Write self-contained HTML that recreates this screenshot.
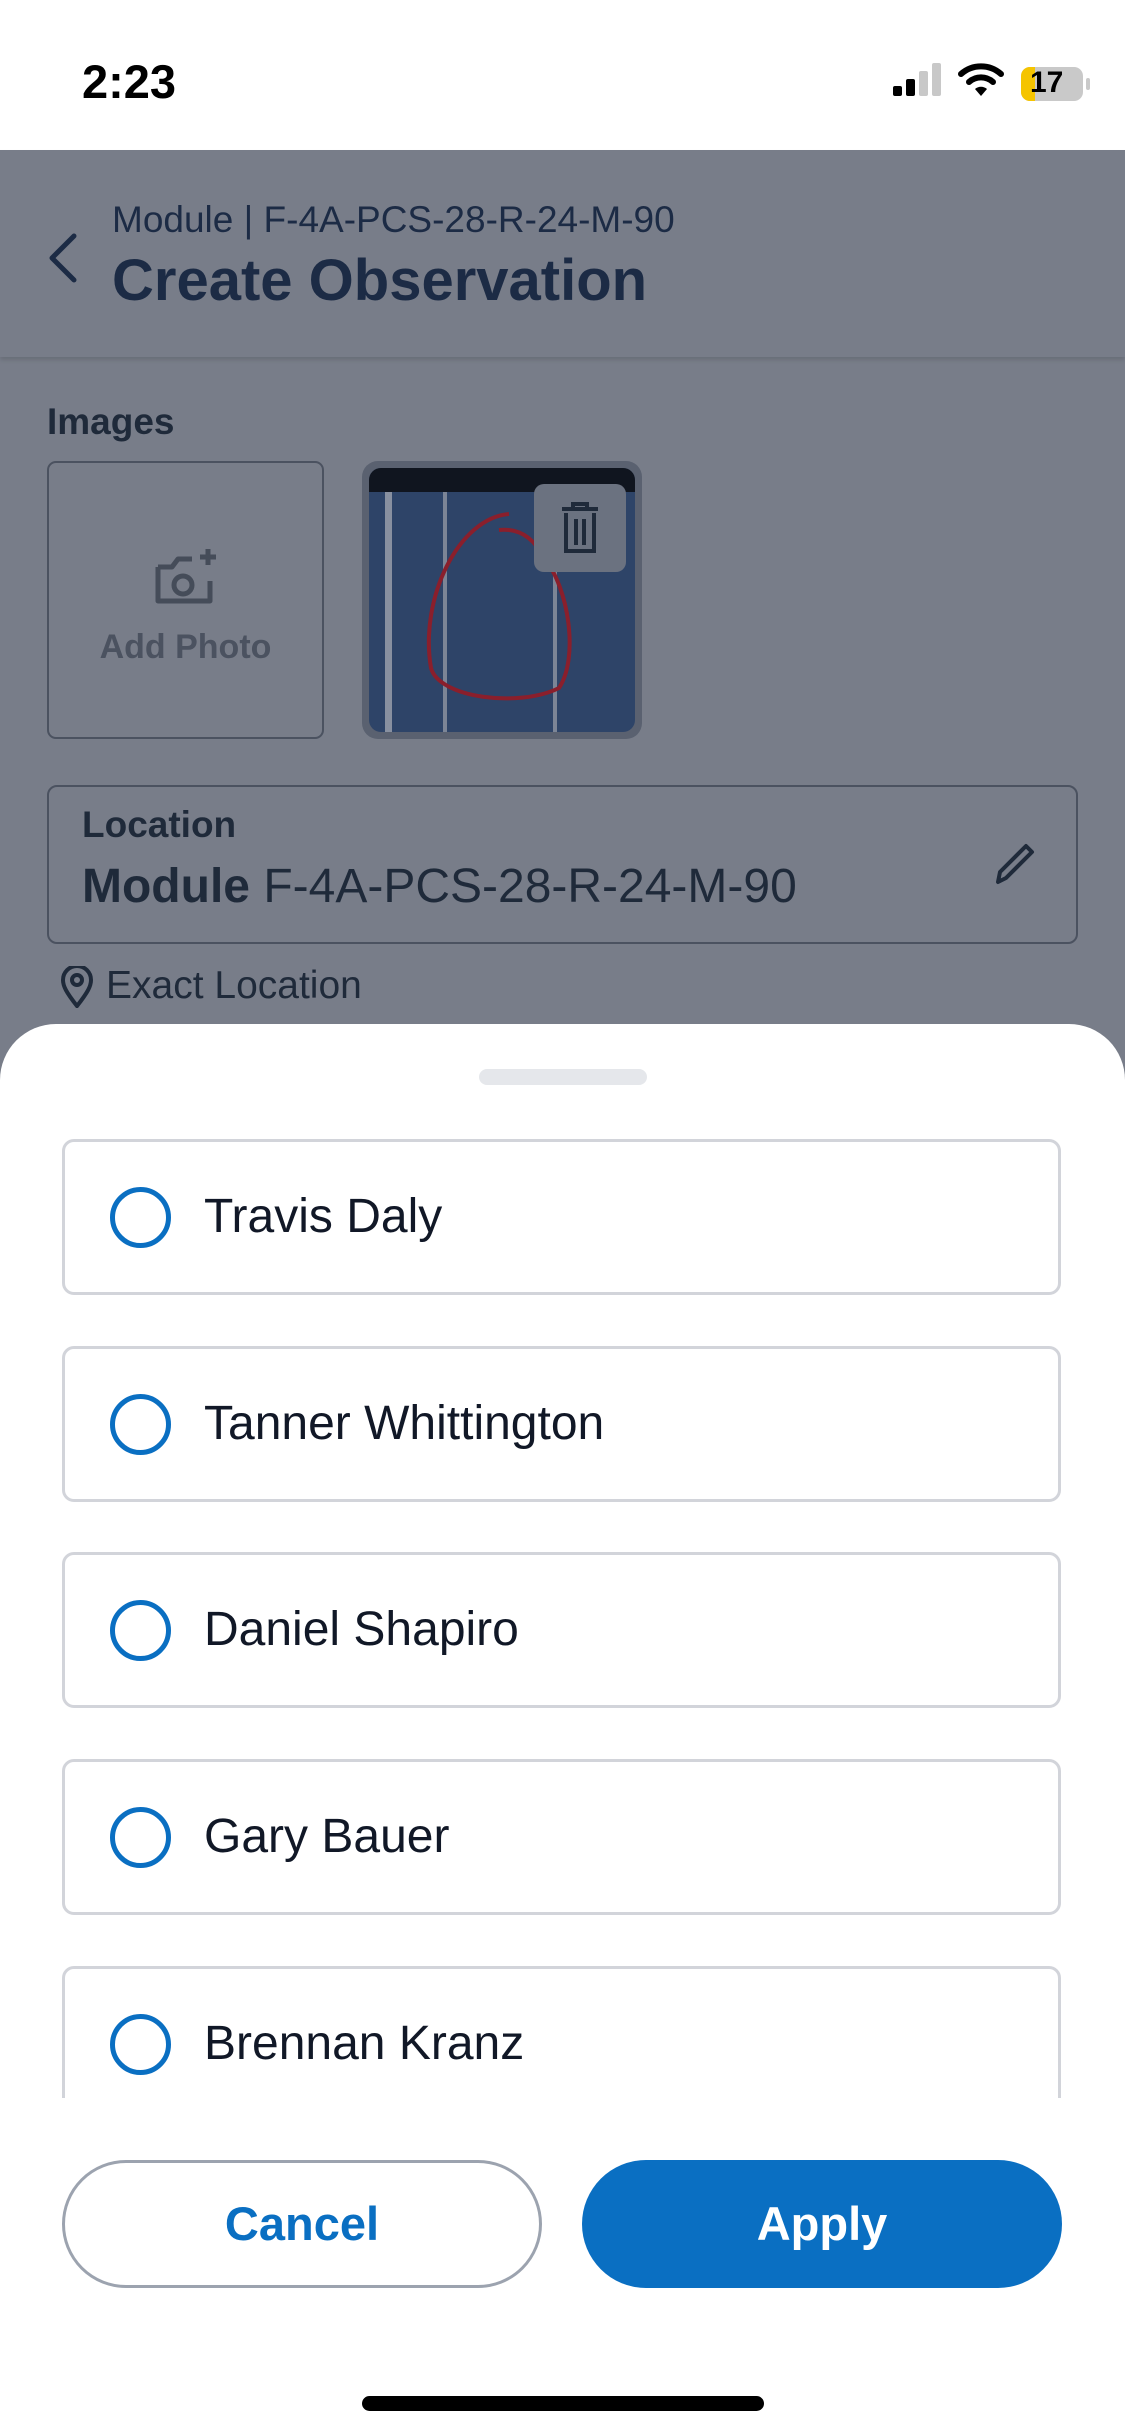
<!DOCTYPE html>
<html><head><meta charset="utf-8"><style>
*{margin:0;padding:0;box-sizing:border-box}
body{width:1125px;height:2436px;position:relative;overflow:hidden;font-family:"Liberation Sans",sans-serif;background:#787d89}
.abs{position:absolute}
.status{left:0;top:0;width:1125px;height:150px;background:#fff}
.time{left:82px;top:54px;font-size:47px;font-weight:bold;color:#000}
.hdr{left:0;top:150px;width:1125px;height:207px;background:#787d89;box-shadow:0 3px 4px rgba(0,0,0,.12)}
.dark{color:#1c2b45}
.sheet{left:0;top:1024px;width:1125px;height:1412px;background:#fff;border-radius:56px 56px 0 0}
.opt{left:62px;width:999px;height:156px;border:3px solid #d2d4da;border-radius:12px;background:#fff}
.radio{position:absolute;left:45px;top:45px;width:61px;height:61px;border:5px solid #0a6fc2;border-radius:50%}
.name{position:absolute;left:139px;top:48px;font-size:48px;color:#111827;line-height:54px}
</style></head><body>
<div class="abs status"></div>
<div class="abs time">2:23</div>
<div class="abs" style="left:893px;top:86px;width:9px;height:10px;background:#000;border-radius:2px"></div>
<div class="abs" style="left:906px;top:79px;width:9px;height:17px;background:#000;border-radius:2px"></div>
<div class="abs" style="left:919px;top:71px;width:9px;height:25px;background:#c8c8c8;border-radius:2px"></div>
<div class="abs" style="left:932px;top:63px;width:9px;height:33px;background:#c8c8c8;border-radius:2px"></div>
<svg class="abs" style="left:958px;top:62px" width="46" height="36" viewBox="0 0 46 36"><path d="M3 12 A30 30 0 0 1 43 12" stroke="#000" stroke-width="6" fill="none" stroke-linecap="round"/><path d="M11 20 A18 18 0 0 1 35 20" stroke="#000" stroke-width="6" fill="none" stroke-linecap="round"/><path d="M17 27 L23 34 L29 27 A9 9 0 0 0 17 27Z" fill="#000"/></svg>
<div class="abs" style="left:1021px;top:67px;width:62px;height:34px;background:#c9c9c9;border-radius:9px;overflow:hidden"><div style="width:14px;height:34px;background:#f5c400"></div></div>
<div class="abs" style="left:1086px;top:78px;width:4px;height:12px;background:#c9c9c9;border-radius:2px"></div>
<div class="abs" style="left:1030px;top:66px;font-size:30px;font-weight:bold;color:#000">17</div>

<div class="abs hdr"></div>
<svg class="abs" style="left:44px;top:230px" width="40" height="56" viewBox="0 0 40 56"><path d="M30 6 L8 28 L30 50" stroke="#1c2b45" stroke-width="5" fill="none" stroke-linecap="round" stroke-linejoin="round"/></svg>
<div class="abs dark" style="left:112px;top:199px;font-size:37px">Module | F-4A-PCS-28-R-24-M-90</div>
<div class="abs dark" style="left:112px;top:247px;font-size:58px;font-weight:bold">Create Observation</div>

<div class="abs dark" style="left:47px;top:401px;font-size:37px;font-weight:bold;color:#1f2a3a">Images</div>
<div class="abs" style="left:47px;top:461px;width:277px;height:278px;border:2px solid #4b5260;border-radius:9px"></div>
<svg class="abs" style="left:152px;top:545px" width="68" height="66" viewBox="0 0 68 66"><path d="M6 22 h14 l6 -8 h14 M6 22 v34 h52 v-20" stroke="#454c59" stroke-width="5" fill="none" stroke-linejoin="round"/><circle cx="31" cy="40" r="9" stroke="#454c59" stroke-width="5" fill="none"/><path d="M56 4 v16 M48 12 h16" stroke="#454c59" stroke-width="5"/></svg>
<div class="abs" style="left:47px;top:628px;width:277px;text-align:center;font-size:34px;font-weight:bold;color:#4b5260">Add Photo</div>
<div class="abs" style="left:362px;top:461px;width:280px;height:278px;border-radius:16px;background:#5a6170"></div>
<div class="abs" style="left:369px;top:468px;width:266px;height:264px;border-radius:12px;overflow:hidden;background:#2e4468">
 <div style="height:24px;background:#10151f"></div>
 <div style="position:absolute;left:16px;top:24px;width:7px;height:240px;background:#8890a0"></div>
 <div style="position:absolute;left:74px;top:24px;width:4px;height:240px;background:#7c8596"></div>
 <div style="position:absolute;left:184px;top:24px;width:4px;height:240px;background:#7c8596"></div>
 <svg style="position:absolute;left:0;top:0" width="266" height="264"><path d="M140 46 C90 50 50 130 62 200 C70 230 150 240 190 220 C210 190 200 120 175 90 C165 70 150 60 130 62" stroke="#8a1f2c" stroke-width="4" fill="none"/></svg>
 <div style="position:absolute;left:165px;top:16px;width:92px;height:88px;border-radius:10px;background:#6b7280"></div>
 <svg style="position:absolute;left:190px;top:33px" width="42" height="54" viewBox="0 0 42 54"><path d="M3 8 h36 M14 8 v-5 h14 v5 M7 12 v38 h28 v-38 M17 18 v26 M25 18 v26" stroke="#1f2a3a" stroke-width="4" fill="none"/></svg>
</div>

<div class="abs" style="left:47px;top:785px;width:1031px;height:159px;border:2px solid #4b5260;border-radius:10px"></div>
<div class="abs" style="left:82px;top:804px;font-size:37px;font-weight:bold;color:#1f2a3a">Location</div>
<div class="abs" style="left:82px;top:859px;font-size:48px;color:#1f2a3a"><b>Module</b> F-4A-PCS-28-R-24-M-90</div>
<svg class="abs" style="left:992px;top:840px" width="44" height="48" viewBox="0 0 44 48"><path d="M6 42 L8 32 L34 6 L40 12 L14 38 Z" stroke="#1f2a3a" stroke-width="4" fill="none" stroke-linejoin="round"/></svg>
<svg class="abs" style="left:60px;top:966px" width="34" height="42" viewBox="0 0 34 42"><path d="M17 40 C6 26 3 20 3 14 A14 14 0 0 1 31 14 C31 20 28 26 17 40Z" stroke="#1f2a3a" stroke-width="4" fill="none"/><circle cx="17" cy="14" r="5" stroke="#1f2a3a" stroke-width="4" fill="none"/></svg>
<div class="abs" style="left:106px;top:964px;font-size:39px;color:#1f2a3a">Exact Location</div>

<div class="abs sheet"></div>
<div class="abs" style="left:479px;top:1069px;width:168px;height:16px;background:#e5e7eb;border-radius:8px"></div>

<div class="abs opt" style="top:1139px"><div class="radio"></div><div class="name">Travis Daly</div></div>
<div class="abs opt" style="top:1346px"><div class="radio"></div><div class="name">Tanner Whittington</div></div>
<div class="abs opt" style="top:1552px"><div class="radio"></div><div class="name">Daniel Shapiro</div></div>
<div class="abs opt" style="top:1759px"><div class="radio"></div><div class="name">Gary Bauer</div></div>
<div class="abs" style="left:0;top:1966px;width:1125px;height:132px;overflow:hidden"><div class="abs opt" style="top:0"><div class="radio"></div><div class="name">Brennan Kranz</div></div></div>

<div class="abs" style="left:62px;top:2160px;width:480px;height:128px;border:3px solid #9ca3af;border-radius:64px;text-align:center;line-height:122px;font-size:47px;font-weight:bold;color:#0a6fc2">Cancel</div>
<div class="abs" style="left:582px;top:2160px;width:480px;height:128px;background:#0a6fc2;border-radius:64px;text-align:center;line-height:128px;font-size:47px;font-weight:bold;color:#fff">Apply</div>
<div class="abs" style="left:362px;top:2396px;width:402px;height:15px;background:#000;border-radius:8px"></div>
</body></html>
